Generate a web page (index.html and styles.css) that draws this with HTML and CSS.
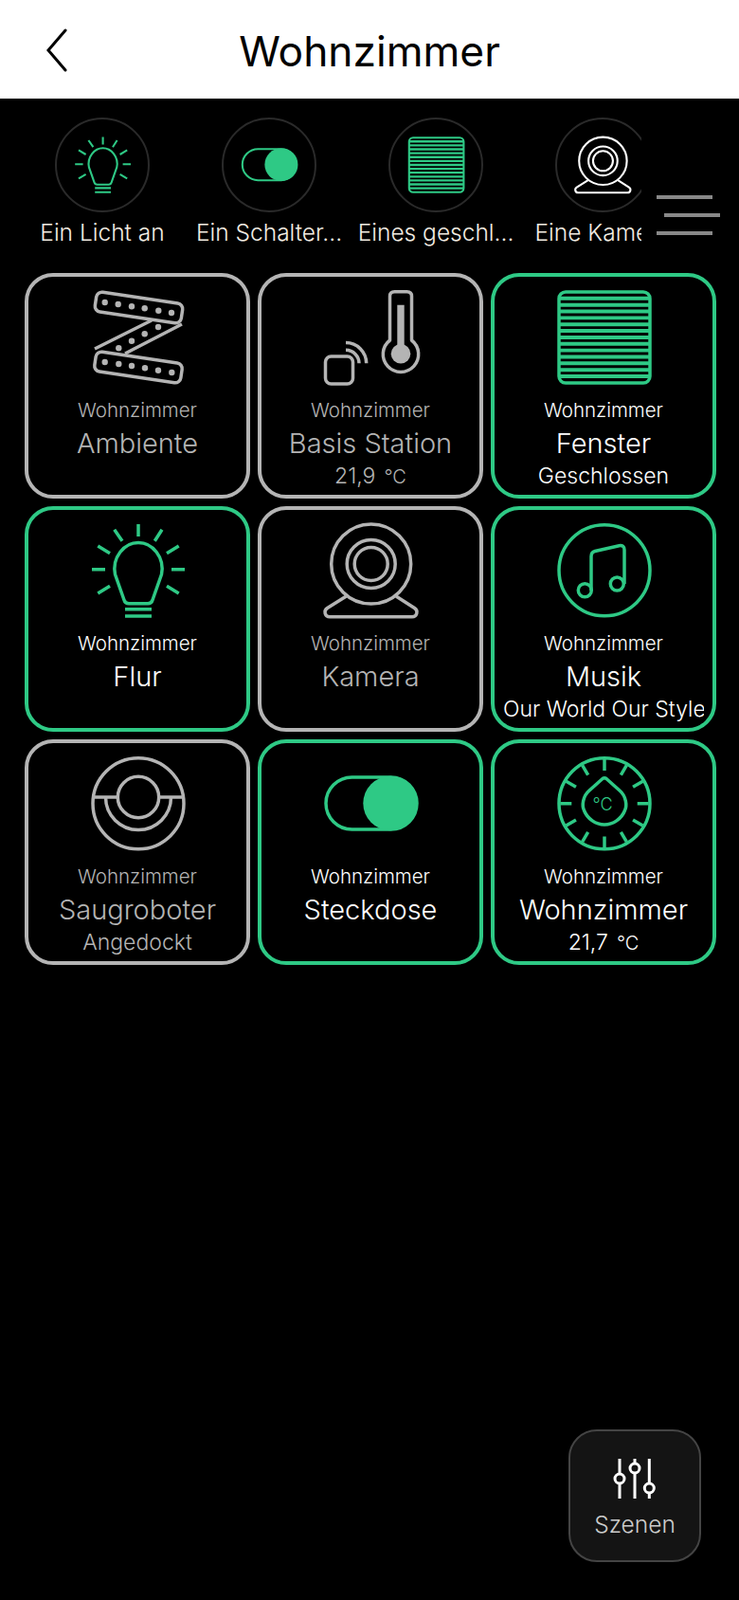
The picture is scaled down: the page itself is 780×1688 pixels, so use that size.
FILE: index.html
```html
<!DOCTYPE html>
<html>
<head>
  <title>Wohnzimmer</title>
  <link rel="stylesheet" href="styles.css">
</head>
<body>
  <svg class="sprites" width="0" height="0">
    <symbol id="i-lamp" viewBox="0 0 100 100">
      <path d="M51 1V14M25.7 6.7L34 18.7M76 6.7L68.3 18.7M8.3 24L21 31.7M93.7 24L81 31.7M2 48.7H16M86 48.7H100M8.3 74L21 66.3M93.7 74L81 66.3"/>
      <path d="M41 84.7H61Q65 84.7 66 81L75.5 54C79 36 66 20.5 51 20.5S23 36 26.5 54L36 81Q37 84.7 41 84.7Z"/>
      <path d="M37 90.7H65M37 98H65"/>
    </symbol>
    <symbol id="i-toggle" viewBox="0 0 100 100">
      <rect x="3" y="22" width="96" height="55" rx="27.5"/>
      <circle class="solid" cx="71" cy="49.5" r="28.7"/>
    </symbol>
    <symbol id="i-blind" viewBox="0 0 100 100">
      <rect x="3" y="2" width="96" height="96" rx="7"/>
      <path class="slats" d="M3 8.8H99M3 15.7H99M3 22.5H99M3 29.4H99M3 36.2H99M3 43H99M3 50H99M3 56.8H99M3 63.6H99M3 70.5H99M3 77.3H99M3 84.2H99M3 91H99"/>
    </symbol>
    <symbol id="i-camera" viewBox="0 0 100 100">
      <circle cx="50.7" cy="43" r="42"/>
      <circle cx="50.7" cy="43" r="25.5"/>
      <circle cx="50.7" cy="43" r="17.5"/>
      <path d="M24.5 77L4.5 89.5C0 92.5 2 98.7 7 98.7H94C99 98.7 101 92.5 96.5 89.5L77 77"/>
    </symbol>
    <symbol id="i-strip" viewBox="0 0 100 100">
      <g transform="translate(4 0)">
        <rect x="1.5" y="8" width="92" height="21" rx="6" transform="rotate(8.5 47.5 18.5)"/>
        <rect x="1" y="71" width="92" height="21" rx="6" transform="rotate(8.5 47 81.5)"/>
        <path d="M61 32L1 62M93 36L33 67"/>
        <g class="solid">
          <circle cx="11.7" cy="13" r="3.2"/><circle cx="25.7" cy="15" r="3.2"/><circle cx="40" cy="17.3" r="3.2"/><circle cx="53.7" cy="19.3" r="3.2"/><circle cx="68.3" cy="21.7" r="3.2"/><circle cx="82" cy="24" r="3.2"/>
          <circle cx="68" cy="39" r="3.2"/><circle cx="53.7" cy="46.3" r="3.2"/><circle cx="40" cy="53.7" r="3.2"/><circle cx="26.3" cy="61.3" r="3.2"/>
          <circle cx="11.7" cy="76" r="3.2"/><circle cx="26.3" cy="78" r="3.2"/><circle cx="40" cy="80" r="3.2"/><circle cx="54" cy="82.3" r="3.2"/><circle cx="68" cy="84.7" r="3.2"/><circle cx="82.3" cy="87" r="3.2"/>
        </g>
      </g>
    </symbol>
    <symbol id="i-station" viewBox="0 0 100 100">
      <path d="M70.5 53V6.5Q70.5 1.7 75.5 1.7H88.5Q93.5 1.7 93.5 6.5V53A18.7 18.7 0 1 1 70.5 53Z"/>
      <path class="solid" d="M78.3 15.7H85.7V58H78.3Z"/>
      <circle class="solid" cx="82" cy="67.3" r="10.3"/>
      <rect x="2.5" y="70" width="29" height="29" rx="6"/>
      <path d="M24 55.6A21.7 21.7 0 0 1 45.7 77.3M24 63.3A14 14 0 0 1 38 77.3"/>
    </symbol>
    <symbol id="i-music" viewBox="0 0 100 100">
      <circle cx="51" cy="49.7" r="48"/>
      <circle cx="30.3" cy="70.7" r="7"/>
      <circle cx="64.3" cy="64" r="7"/>
      <path d="M37 71V35Q37 30.5 41 29.5L66.5 23.7Q72 23 72 28V64"/>
    </symbol>
    <symbol id="i-robot" viewBox="0 0 100 100">
      <circle cx="51" cy="49.7" r="48"/>
      <circle cx="51" cy="43" r="21.7"/>
      <path d="M4 43H29M73 43H98M16.5 43A34.5 34.5 0 0 0 85.5 43"/>
    </symbol>
    <symbol id="i-climate" viewBox="0 0 100 100">
      <circle cx="51" cy="49.7" r="48"/>
      <g>
        <path d="M51 3V15"/>
        <path d="M51 3V15" transform="rotate(30 51 49.7)"/>
        <path d="M51 3V15" transform="rotate(60 51 49.7)"/>
        <path d="M51 3V15" transform="rotate(90 51 49.7)"/>
        <path d="M51 3V15" transform="rotate(120 51 49.7)"/>
        <path d="M51 3V15" transform="rotate(150 51 49.7)"/>
        <path d="M51 3V15" transform="rotate(180 51 49.7)"/>
        <path d="M51 3V15" transform="rotate(210 51 49.7)"/>
        <path d="M51 3V15" transform="rotate(240 51 49.7)"/>
        <path d="M51 3V15" transform="rotate(270 51 49.7)"/>
        <path d="M51 3V15" transform="rotate(300 51 49.7)"/>
        <path d="M51 3V15" transform="rotate(330 51 49.7)"/>
      </g>
      <path d="M49 23.5L35 36C28 42 27 52 29.5 57C33 66 42 72 51 72C60 72 69 66 72.5 57C75 52 74 42 67 36L53 23.5Q51 22 49 23.5Z"/>
    </symbol>
  </svg>

  <header class="topbar">
    <svg class="back" width="24" height="46" viewBox="0 0 24 46"><path d="M21 2L3 23L21 44"/></svg>
    <h1>Wohnzimmer</h1>
  </header>

  <main class="content">
    <div class="strip">
      <div class="strip-item on">
        <div class="ring"><svg class="ico-small"><use href="#i-lamp"/></svg></div>
        <div class="strip-label">Ein Licht an</div>
      </div>
      <div class="strip-item on">
        <div class="ring"><svg class="ico-small"><use href="#i-toggle"/></svg></div>
        <div class="strip-label">Ein Schalter...</div>
      </div>
      <div class="strip-item on">
        <div class="ring"><svg class="ico-small"><use href="#i-blind"/></svg></div>
        <div class="strip-label">Eines geschl...</div>
      </div>
      <div class="strip-item">
        <div class="ring"><svg class="ico-small"><use href="#i-camera"/></svg></div>
        <div class="strip-label">Eine Kamera</div>
      </div>
    </div>

    <div class="grid">
      <div class="card">
        <svg class="ico"><use href="#i-strip"/></svg>
        <div class="room">Wohnzimmer</div>
        <div class="name">Ambiente</div>
      </div>
      <div class="card">
        <svg class="ico"><use href="#i-station"/></svg>
        <div class="room">Wohnzimmer</div>
        <div class="name">Basis Station</div>
        <div class="state">21,9<span class="unit">°C</span></div>
      </div>
      <div class="card on">
        <svg class="ico"><use href="#i-blind"/></svg>
        <div class="room">Wohnzimmer</div>
        <div class="name">Fenster</div>
        <div class="state">Geschlossen</div>
      </div>
      <div class="card on">
        <svg class="ico"><use href="#i-lamp"/></svg>
        <div class="room">Wohnzimmer</div>
        <div class="name">Flur</div>
      </div>
      <div class="card">
        <svg class="ico"><use href="#i-camera"/></svg>
        <div class="room">Wohnzimmer</div>
        <div class="name">Kamera</div>
      </div>
      <div class="card on">
        <svg class="ico"><use href="#i-music"/></svg>
        <div class="room">Wohnzimmer</div>
        <div class="name">Musik</div>
        <div class="state">Our World Our Style</div>
      </div>
      <div class="card">
        <svg class="ico"><use href="#i-robot"/></svg>
        <div class="room">Wohnzimmer</div>
        <div class="name">Saugroboter</div>
        <div class="state">Angedockt</div>
      </div>
      <div class="card on">
        <svg class="ico"><use href="#i-toggle"/></svg>
        <div class="room">Wohnzimmer</div>
        <div class="name">Steckdose</div>
      </div>
      <div class="card on">
        <svg class="ico" viewBox="0 0 100 100">
          <use href="#i-climate" width="100" height="100"/>
          <text class="drop-unit" x="49" y="57" text-anchor="middle">°C</text>
        </svg>
        <div class="room">Wohnzimmer</div>
        <div class="name">Wohnzimmer</div>
        <div class="state">21,7<span class="unit">°C</span></div>
      </div>
    </div>
  </main>

  <div class="menu"><span></span><span></span><span></span></div>

  <div class="scenes">
    <svg class="scenes-ico" width="48" height="44" viewBox="-1 0 48 44">
      <path d="M7 1V43M23 1V43M38.300 1V43"/>
      <circle cx="7" cy="22" r="5"/>
      <circle cx="23" cy="11" r="5"/>
      <circle cx="38.300" cy="32" r="5"/>
    </svg>
    <div class="scenes-label">Szenen</div>
  </div>
</body>
</html>
```

FILE: styles.css
```css
body {
  margin: 0;
  background: #000;
  font-family: Inter, "Noto Sans", sans-serif;
  font-weight: 350;
  height: 1688px;
  position: relative;
  overflow: hidden;
}
.sprites {
  position: absolute;
}
symbol, .ico, .ico-small {
  overflow: visible;
}
.ico, .ico-small {
  fill: none;
  stroke: currentColor;
  stroke-width: 3.5;
  stroke-linecap: butt;
  stroke-linejoin: round;
}
.solid {
  fill: currentColor;
  stroke: none;
}
.slats {
  stroke-width: 3.9;
}
.drop-unit {
  fill: currentColor;
  stroke: none;
  font-size: 18px;
  font-family: Inter, sans-serif;
}

.topbar {
  height: 104px;
  box-sizing: border-box;
  padding-top: 3px;
  background: #fff;
  display: flex;
  align-items: center;
  justify-content: center;
  position: relative;
}
.topbar h1 {
  margin: 0;
  font-size: 44.300px;
  font-weight: 400;
  color: #000;
}
.back {
  position: absolute;
  left: 48px;
  top: 30px;
  fill: none;
  stroke: #000;
  stroke-width: 3;
  stroke-linecap: round;
}

.strip {
  display: flex;
  margin-left: 20px;
  width: 657px;
  height: 184px;
  overflow: hidden;
}
.strip-item {
  flex: 0 0 176px;
  padding-top: 20px;
  color: #fff;
}
.strip-item.on {
  color: #2ec985;
}
.ring {
  width: 96px;
  height: 96px;
  margin: 0 auto;
  border: 2px solid #2a2a2a;
  border-radius: 50%;
  display: flex;
  align-items: center;
  justify-content: center;
}
.ico-small {
  width: 60px;
  height: 60px;
}
.strip-label {
  margin-top: 6px;
  font-size: 24.500px;
  line-height: 30px;
  color: #f2ece2;
  text-align: center;
  white-space: nowrap;
}

.grid {
  display: grid;
  grid-template-columns: repeat(3, 238px);
  grid-auto-rows: 238px;
  gap: 8px;
  padding-left: 26px;
}
.card {
  box-sizing: border-box;
  border: 4px solid #b4b4b4;
  border-radius: 30px;
  padding-top: 14px;
  color: #b4b4b4;
  text-align: center;
  overflow: hidden;
}
.card.on {
  border-color: #2ec985;
  color: #fff;
}
.ico {
  display: block;
  width: 100px;
  height: 100px;
  margin: 0 auto;
}
.card.on .ico {
  color: #2ec985;
}
.room {
  margin-top: 14px;
  font-size: 20.500px;
  line-height: 26px;
}
.name {
  margin-top: 4px;
  font-size: 29px;
  line-height: 36px;
}
.state {
  margin: 1px auto 0;
  width: 212px;
  font-size: 23px;
  line-height: 30px;
  white-space: nowrap;
  overflow: hidden;
}
.unit {
  margin-left: 9px;
  font-size: 20px;
}

.menu {
  position: absolute;
  left: 693px;
  top: 206px;
  width: 68px;
  display: flex;
  flex-direction: column;
  gap: 15px;
}
.menu span {
  display: block;
  width: 59px;
  height: 4px;
  background: #888;
}
.menu span:nth-child(2) {
  margin-left: 8px;
}

.scenes {
  position: absolute;
  left: 600px;
  top: 1508px;
  box-sizing: border-box;
  width: 140px;
  height: 140px;
  background: #141414;
  border: 2px solid #444;
  border-radius: 30px;
  padding-top: 28px;
  text-align: center;
}
.scenes-ico {
  display: block;
  margin: 0 auto;
  fill: #141414;
  stroke: #fff;
  stroke-width: 3;
}
.scenes-label {
  margin-top: 11px;
  font-size: 24.500px;
  line-height: 30px;
  color: #ccc;
}
```
